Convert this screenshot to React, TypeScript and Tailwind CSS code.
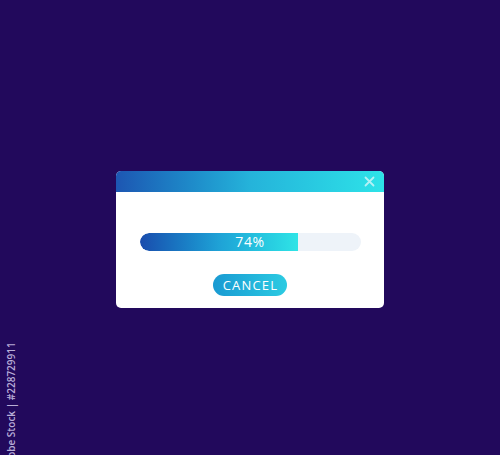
import React from "react";

export default function App() {
  const progress = 71.5;
  return (
    <div
      className="relative w-[500px] h-[455px] bg-[#22095c] overflow-hidden"
      style={{ fontFamily: "'Open Sans', 'Liberation Sans', sans-serif" }}
    >
      {/* stock id strip along the left edge */}
      <div className="absolute left-[2px] top-[343px] w-[18px] h-[126px] flex items-center justify-center">
        <span className="block -rotate-90 whitespace-nowrap text-[10px] font-semibold text-[#d6cdee]/85">
          Adobe Stock | #228729911
        </span>
      </div>

      <div className="flex h-full items-start justify-center pt-[171px]">
        <div className="w-[268px] h-[137px] rounded-[5px] bg-white overflow-hidden flex flex-col">
          <div className="h-[21px] shrink-0 bg-gradient-to-r from-[#1d56b2] via-[#25b3da] to-[#2ee3e8] flex items-center justify-end pr-[8px]">
            <svg width="11" height="11" viewBox="0 0 11 11" className="mr-[1px]">
              <path
                d="M1.5 1.5 L9.5 9.5 M9.5 1.5 L1.5 9.5"
                stroke="#b4f1f5"
                strokeWidth="1.8"
                strokeLinecap="round"
              />
            </svg>
          </div>
          <div className="flex flex-col items-center pt-[41px]">
            <div className="relative w-[221px] h-[18px] rounded-full bg-[#eef3f9] overflow-hidden">
              <div
                className="h-full rounded-l-full bg-gradient-to-r from-[#1a4cad] via-[#1fa2d6] to-[#2fe4e6]"
                style={{ width: `${progress}%` }}
              />
              <div className="absolute inset-0 flex items-center justify-center text-white text-[14px] leading-none tracking-[0.6px] pb-[1px]">
                74%
              </div>
            </div>
            <button className="mt-[23px] w-[74px] h-[22px] rounded-full bg-gradient-to-r from-[#1a9ad2] to-[#2ccbe2] text-white text-[13px] leading-none tracking-[1.2px] flex items-center justify-center pl-[1px]">
              CANCEL
            </button>
          </div>
        </div>
      </div>
    </div>
  );
}
